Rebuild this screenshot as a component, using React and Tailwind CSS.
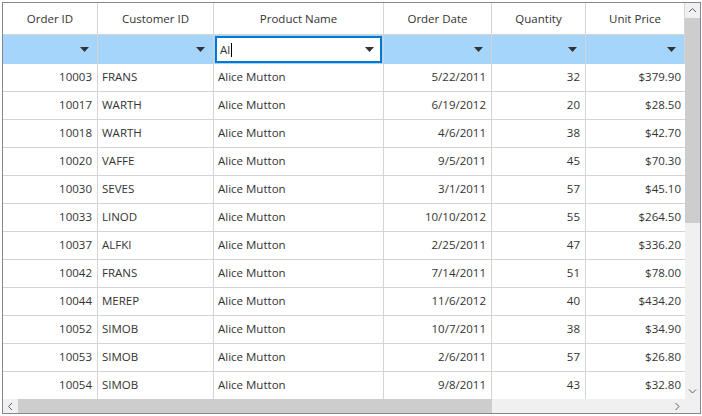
import React from 'react';

const columns = [
    { key: 'id', title: 'Order ID', width: 'w-[95px]', align: 'text-right' },
    { key: 'customer', title: 'Customer ID', width: 'w-[116px]', align: 'text-left' },
    { key: 'product', title: 'Product Name', width: 'w-[170px]', align: 'text-left' },
    { key: 'date', title: 'Order Date', width: 'w-[108px]', align: 'text-right' },
    { key: 'qty', title: 'Quantity', width: 'w-[94px]', align: 'text-right' },
    { key: 'price', title: 'Unit Price', width: 'w-[99px]', align: 'text-right' },
];

const orders = [
    ['10003', 'FRANS', '5/22/2011', '32', '$379.90'],
    ['10017', 'WARTH', '6/19/2012', '20', '$28.50'],
    ['10018', 'WARTH', '4/6/2011', '38', '$42.70'],
    ['10020', 'VAFFE', '9/5/2011', '45', '$70.30'],
    ['10030', 'SEVES', '3/1/2011', '57', '$45.10'],
    ['10033', 'LINOD', '10/10/2012', '55', '$264.50'],
    ['10037', 'ALFKI', '2/25/2011', '47', '$336.20'],
    ['10042', 'FRANS', '7/14/2011', '51', '$78.00'],
    ['10044', 'MEREP', '11/6/2012', '40', '$434.20'],
    ['10052', 'SIMOB', '10/7/2011', '38', '$34.90'],
    ['10053', 'SIMOB', '2/6/2011', '57', '$26.80'],
    ['10054', 'SIMOB', '9/8/2011', '43', '$32.80'],
];

const DropArrow = () => (
    <svg width="9" height="5" viewBox="0 0 9 5" className="shrink-0">
        <path d="M0 0 H9 L4.5 5 Z" fill="#333333" />
    </svg>
);

const Chevron = ({ dir }) => {
    const paths = {
        up: 'M1 5 L4.5 1.5 L8 5',
        down: 'M1 1.5 L4.5 5 L8 1.5',
        left: 'M5 1 L1.5 4.5 L5 8',
        right: 'M1.5 1 L5 4.5 L1.5 8',
    };
    const vertical = dir === 'up' || dir === 'down';
    return (
        <svg
            width={vertical ? 9 : 7}
            height={vertical ? 7 : 9}
            viewBox={vertical ? '0 0 9 7' : '0 0 7 9'}
        >
            <path d={paths[dir]} fill="none" stroke="#606060" strokeWidth="1" />
        </svg>
    );
};

const App = () => {
    return (
        <div className="w-[702px] h-[416px] bg-white pt-[2px] pl-[2px] font-['Open_Sans',sans-serif] text-[11.5px] text-[#333333]">
            <div className="w-[699px] h-[412px] border border-[#828790] flex flex-col overflow-hidden">
                <div className="flex flex-1 min-h-0">
                    {/* grid area */}
                    <div className="flex-1 flex flex-col overflow-hidden">
                        {/* header */}
                        <div className="flex h-[32px] shrink-0 border-b border-[#d4d4d4]">
                            {columns.map((col) => (
                                <div
                                    key={col.key}
                                    className={`${col.width} shrink-0 flex items-center justify-center border-r border-[#d4d4d4]`}
                                >
                                    {col.title}
                                </div>
                            ))}
                        </div>

                        {/* filter row */}
                        <div className="flex h-[29px] shrink-0 bg-[#a6d5fb]">
                            {columns.map((col) =>
                                col.key === 'product' ? (
                                    <div key={col.key} className={`${col.width} shrink-0 border-r border-[#d4d4d4] pl-[1px] pr-[1px] py-[1px]`}>
                                        <div className="h-full bg-white border-2 border-[#0078d7] flex items-center justify-between pl-[3px] pr-[6px]">
                                            <span className="flex items-center">
                                                Al<span className="inline-block w-[1px] h-[14px] bg-black ml-[1px]" />
                                            </span>
                                            <DropArrow />
                                        </div>
                                    </div>
                                ) : (
                                    <div
                                        key={col.key}
                                        className={`${col.width} shrink-0 flex items-center justify-end pr-[8px] border-r border-[#d4d4d4]`}
                                    >
                                        <DropArrow />
                                    </div>
                                )
                            )}
                        </div>

                        {/* rows */}
                        {orders.map(([id, customer, date, qty, price]) => (
                            <div key={id} className="flex h-[28px] shrink-0 border-b border-[#d4d4d4]">
                                <div className="w-[95px] shrink-0 flex items-center justify-end pr-[5px] pb-[2px] border-r border-[#d4d4d4]">{id}</div>
                                <div className="w-[116px] shrink-0 flex items-center pl-[4px] pb-[2px] border-r border-[#d4d4d4]">{customer}</div>
                                <div className="w-[170px] shrink-0 flex items-center pl-[4px] pb-[2px] border-r border-[#d4d4d4]">Alice Mutton</div>
                                <div className="w-[108px] shrink-0 flex items-center justify-end pr-[5px] pb-[2px] border-r border-[#d4d4d4]">{date}</div>
                                <div className="w-[94px] shrink-0 flex items-center justify-end pr-[5px] pb-[2px] border-r border-[#d4d4d4]">{qty}</div>
                                <div className="w-[99px] shrink-0 flex items-center justify-end pr-[4px] pb-[2px]">{price}</div>
                            </div>
                        ))}
                    </div>

                    {/* vertical scrollbar */}
                    <div className="w-[15px] shrink-0 bg-[#f0f0f0] flex flex-col items-center">
                        <div className="h-[15px] flex items-center justify-center">
                            <Chevron dir="up" />
                        </div>
                        <div className="w-full h-[205px] bg-[#cdcdcd]" />
                        <div className="flex-1" />
                        <div className="h-[15px] flex items-center justify-center">
                            <Chevron dir="down" />
                        </div>
                    </div>
                </div>

                {/* horizontal scrollbar */}
                <div className="flex h-[14px] shrink-0 bg-[#f0f0f0]">
                    <div className="w-[15px] flex items-center justify-center">
                        <Chevron dir="left" />
                    </div>
                    <div className="w-[474px] h-full bg-[#cdcdcd]" />
                    <div className="flex-1" />
                    <div className="w-[15px] flex items-center justify-center">
                        <Chevron dir="right" />
                    </div>
                    <div className="w-[15px]" />
                </div>
            </div>
        </div>
    );
};

export default App;
